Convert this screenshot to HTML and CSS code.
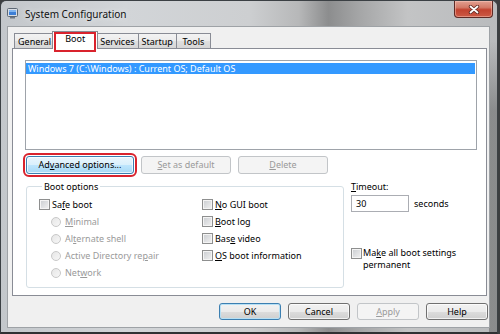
FILE: index.html
```html
<!DOCTYPE html>
<html lang="en">
<head>
    <meta charset="UTF-8">
    <meta name="viewport" content="width=device-width, initial-scale=1.0">
    <title>System Configuration</title>
    <link rel="stylesheet" href="styles.css">
</head>
<body>
    <div class="window">
        <div class="titlebar">
            <svg class="app-icon" width="11" height="11" viewBox="0 0 11 11">
                <rect x="0.5" y="0.5" width="10" height="8" rx="1" fill="#d8dde4" stroke="#5d6874"/>
                <rect x="2" y="2" width="7" height="5" fill="#3d7fd6"/>
                <rect x="2" y="2" width="7" height="2" fill="#7fb4ef"/>
                <rect x="3" y="9" width="5" height="1.5" fill="#6f7884"/>
            </svg>
            <span class="title">System Configuration</span>
            <div class="close-button">
                <svg width="12" height="9" viewBox="0 0 12 9">
                    <path d="M2.5 1.5 L9.5 7.5 M9.5 1.5 L2.5 7.5" stroke="#5a2620" stroke-width="3.4" stroke-linecap="round"/>
                    <path d="M2.5 1.5 L9.5 7.5 M9.5 1.5 L2.5 7.5" stroke="#fff" stroke-width="1.8" stroke-linecap="round"/>
                </svg>
            </div>
        </div>

        <div class="client">
            <div class="tabs">
                <div class="tab">General</div>
                <div class="tab selected marked">Boot</div>
                <div class="tab">Services</div>
                <div class="tab">Startup</div>
                <div class="tab">Tools</div>
            </div>

            <div class="panel">
                <div class="listbox">
                    <div class="list-item selected">Windows 7 (C:\Windows) : Current OS; Default OS</div>
                </div>

                <div class="button-row">
                    <button class="button hot highlight advanced">Ad<u>v</u>anced options...</button>
                    <button class="button wide" disabled><u>S</u>et as default</button>
                    <button class="button wide" disabled><u>D</u>elete</button>
                </div>

                <div class="options-row">
                    <fieldset class="group">
                        <legend>Boot options</legend>
                        <div class="group-grid">
                            <div class="option-col">
                                <label class="option"><span class="check"></span><span>Sa<u>f</u>e boot</span></label>
                                <label class="option sub disabled"><span class="radio"></span><span><u>M</u>inimal</span></label>
                                <label class="option sub disabled"><span class="radio"></span><span>Al<u>t</u>ernate shell</span></label>
                                <label class="option sub disabled"><span class="radio"></span><span>Active Directory re<u>p</u>air</span></label>
                                <label class="option sub disabled"><span class="radio"></span><span>Net<u>w</u>ork</span></label>
                            </div>
                            <div class="option-col">
                                <label class="option"><span class="check"></span><span><u>N</u>o GUI boot</span></label>
                                <label class="option"><span class="check"></span><span><u>B</u>oot log</span></label>
                                <label class="option"><span class="check"></span><span>Bas<u>e</u> video</span></label>
                                <label class="option"><span class="check"></span><span><u>O</u>S boot information</span></label>
                            </div>
                        </div>
                    </fieldset>

                    <div class="timeout-col">
                        <div class="timeout-label"><u>T</u>imeout:</div>
                        <div class="timeout-row">
                            <div class="textbox">30</div>
                            <span class="unit">seconds</span>
                        </div>
                        <label class="option permanent"><span class="check"></span><span class="wrap-text">Ma<u>k</u>e all boot settings permanent</span></label>
                    </div>
                </div>
            </div>

            <div class="footer">
                <button class="button default">OK</button>
                <button class="button">Cancel</button>
                <button class="button" disabled><u>A</u>pply</button>
                <button class="button">Help</button>
            </div>
        </div>
    </div>
</body>
</html>
```

FILE: styles.css
```css
body {
    margin: 0;
    background-color: #3c3e40;
    font-family: "Noto Sans", sans-serif;
    font-size: 9px;
    color: #000;
}

.window {
    width: 498px;
    height: 334px;
    box-sizing: border-box;
    display: flex;
    flex-direction: column;
    border: 1px solid #3b4044;
    border-bottom: 2px solid #2f3133;
    border-radius: 6px 6px 0 0;
    background:
        linear-gradient(rgba(60, 60, 60, 0) 40px, rgba(50, 50, 50, 0.35) 110px) right top / 8px 100% no-repeat,
        linear-gradient(to right, #c3c7cb 0%, #d2d5d8 25%, #cdcfd1 50%, #b7b8b9 60%, #8c8d8e 66%, #a4a5a6 72%, #c3c4c5 82%, #b9bbbd 100%);
}

/* title bar */
.titlebar {
    height: 25px;
    flex-shrink: 0;
    display: flex;
    align-items: center;
    padding-left: 6px;
}

.app-icon {
    margin-right: 7px;
}

.title {
    font-size: 10px;
    color: #111;
    text-shadow: 0 0 6px rgba(255, 255, 255, 0.9);
}

.close-button {
    align-self: flex-start;
    margin-left: auto;
    margin-right: 4px;
    width: 39px;
    height: 17px;
    box-sizing: border-box;
    display: flex;
    align-items: center;
    justify-content: center;
    border: 1px solid #5e2a25;
    border-top: none;
    border-radius: 0 0 4px 4px;
    background: linear-gradient(#e2a091 0%, #d37a68 40%, #c2422f 55%, #cc5a45 100%);
    box-shadow: inset 0 0 0 1px rgba(255, 210, 200, 0.45);
}

/* client area */
.client {
    flex: 1;
    margin: 0 7px 4px 6px;
    background-color: #f0f0f0;
    border: 1px solid #9ea2a6;
    padding: 4px 2px 0 4px;
    display: flex;
    flex-direction: column;
}

.tabs {
    display: flex;
    align-items: flex-end;
    height: 17px;
    padding-left: 2px;
    position: relative;
    z-index: 1;
}

.tab {
    height: 15px;
    min-width: 35px;
    box-sizing: border-box;
    padding: 1px 3px 0;
    line-height: 13px;
    text-align: center;
    border: 1px solid #898c95;
    border-bottom: none;
    margin-right: -1px;
    background: linear-gradient(#f3f3f3 0%, #ebebeb 50%, #e0e0e0 50%, #d6d6d6 100%);
}

.tab.selected {
    position: relative;
    height: 18px;
    min-width: 46px;
    margin: 0 -2px -1px -2px;
    padding: 0 6px;
    background: #fff;
    z-index: 2;
}

.marked::after {
    content: "";
    position: absolute;
    left: 1px;
    right: 1px;
    top: 0;
    bottom: -3px;
    border: 2px solid #d9232d;
}

.panel {
    height: 248px;
    box-sizing: border-box;
    border: 1px solid #898c95;
    background-color: #fff;
    padding: 11px 9px 0 12px;
}

.listbox {
    height: 90px;
    box-sizing: border-box;
    border: 1px solid #9ea3aa;
    padding: 2px 1px 0 0;
}

.list-item {
    line-height: 11px;
    padding-left: 2px;
    white-space: nowrap;
}

.list-item.selected {
    background-color: #3399ff;
    color: #fff;
}

/* buttons */
.button-row {
    display: flex;
    gap: 7px;
    margin-top: 6px;
    padding-left: 1px;
}

.button {
    height: 18px;
    width: 62px;
    box-sizing: border-box;
    padding: 0;
    font-family: inherit;
    font-size: inherit;
    line-height: 14px;
    color: #000;
    border: 1px solid #707070;
    border-radius: 3px;
    background: linear-gradient(#f2f2f2 0%, #ebebeb 50%, #dddddd 50%, #cfcfcf 100%);
    box-shadow: inset 0 0 0 1px rgba(255, 255, 255, 0.7);
}

.button.advanced {
    width: 108px;
}

.button.wide {
    width: 90px;
}

.button.hot {
    border-color: #3c7fb1;
    background: linear-gradient(#eaf6fd 0%, #d9f0fc 50%, #bee6fd 50%, #a7d9f5 100%);
}

.button.default {
    border-color: #3c7fb1;
    box-shadow: inset 0 0 0 1px #b6e0f5;
}

.button:disabled {
    color: #9a9a9a;
    border-color: #c2c5c8;
    background: #f4f4f4;
    box-shadow: none;
}

.highlight {
    outline: 2px solid #d9232d;
    outline-offset: 1px;
}

/* boot options */
.options-row {
    display: flex;
    margin-top: 6px;
    padding-left: 1px;
}

.group {
    margin: 0;
    width: 318px;
    height: 108px;
    box-sizing: border-box;
    border: 1px solid #d5dfe5;
    border-radius: 3px;
    padding: 3px 0 0 12px;
}

.group legend {
    padding: 0 2px;
    margin-left: 3px;
    line-height: 13px;
}

.group-grid {
    display: grid;
    grid-template-columns: 163px 1fr;
}

.option {
    display: flex;
    align-items: center;
    height: 17px;
    white-space: nowrap;
}

.option.sub {
    padding-left: 12px;
}

.option.disabled {
    color: #9a9a9a;
}

.check {
    width: 11px;
    height: 11px;
    box-sizing: border-box;
    margin-right: 2px;
    border: 1px solid #8e8f8f;
    background: linear-gradient(135deg, #c9ccd0, #f2f2f2);
    box-shadow: inset 0 0 0 1px #f4f4f4;
    flex-shrink: 0;
}

.radio {
    width: 10px;
    height: 10px;
    box-sizing: border-box;
    margin-right: 4px;
    border: 1px solid #c8c8c8;
    border-radius: 50%;
    background: linear-gradient(135deg, #e6e6e6, #f7f7f7);
    flex-shrink: 0;
}

.timeout-col {
    margin-left: 7px;
}

.timeout-label {
    line-height: 13px;
}

.timeout-row {
    display: flex;
    align-items: center;
    margin-top: 2px;
}

.textbox {
    width: 58px;
    height: 17px;
    box-sizing: border-box;
    border: 1px solid #abadb3;
    padding-left: 4px;
    line-height: 15px;
}

.unit {
    margin-left: 5px;
}

.option.permanent {
    align-items: flex-start;
    height: auto;
    margin-top: 35px;
    white-space: normal;
}

.option.permanent .check {
    margin-top: 1px;
    margin-right: 1px;
}

.wrap-text {
    width: 94px;
    line-height: 12px;
}

.footer {
    display: flex;
    justify-content: flex-end;
    gap: 7px;
    margin-top: 7px;
    margin-right: -1px;
}

.footer .button {
    height: 17px;
    line-height: 13px;
}
```
